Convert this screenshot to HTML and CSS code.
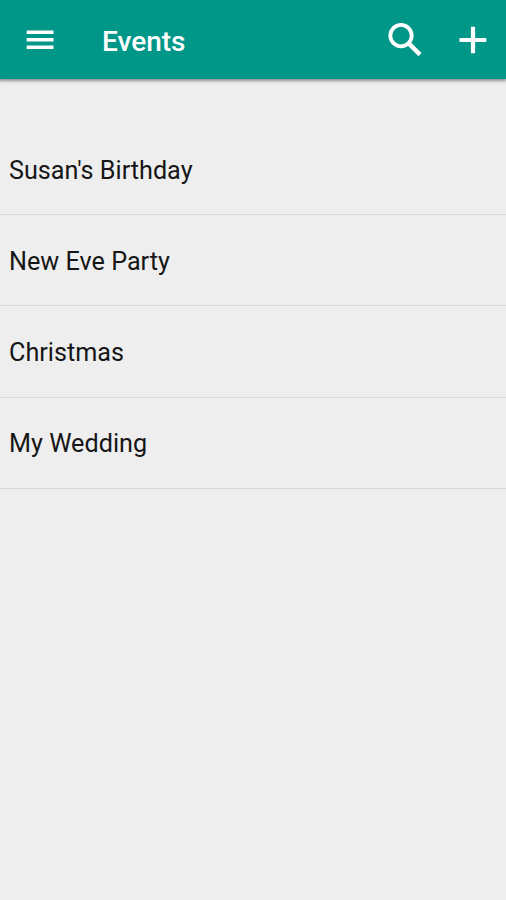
FILE: index.html
```html
<!DOCTYPE html>
<html lang="en">
<head>
<meta charset="utf-8">
<title>Events</title>
<link rel="stylesheet" href="styles.css">
</head>
<body>
<header class="toolbar">
  <button class="icon-button menu" aria-label="Menu"><svg width="28" height="20" viewBox="0 0 28 20"><path d="M0.7 0.6h26.8v3.4H0.7zM0.7 8h26.8v3.4H0.7zM0.7 15.5h26.8v3.4H0.7z"/></svg></button>
  <h1 class="title">Events</h1>
  <button class="icon-button search" aria-label="Search"><svg width="34" height="34" viewBox="0 0 34 34"><circle class="lens" cx="13" cy="12.6" r="10.7"/><path class="handle" d="M20.5 20.1l11.5 11.5"/></svg></button>
  <button class="icon-button add" aria-label="Add"><svg width="28" height="28" viewBox="0 0 28 28"><path d="M11.9 0.7h4.2v11.2h11.2v4.2H16.1v11.2h-4.2V16.1H0.5v-4.2h11.4z"/></svg></button>
</header>
<ul class="events">
  <li class="event">Susan's Birthday</li>
  <li class="event">New Eve Party</li>
  <li class="event">Christmas</li>
  <li class="event">My Wedding</li>
</ul>
</body>
</html>
```
FILE: styles.css
```css
* { box-sizing: border-box; }
body {
  margin: 0;
  min-height: 100vh;
  background: #eee;
  color: #161616;
  font-family: Roboto, sans-serif;
}
.toolbar {
  display: flex;
  align-items: center;
  height: 79px;
  padding: 0 19px 0 26px;
  background: #009688;
  box-shadow: 0 1px 3px 1px rgba(0, 0, 0, .4);
  color: #fff;
}
.icon-button {
  display: flex;
  padding: 0;
  border: 0;
  background: none;
  fill: #fff;
}
.title {
  flex: 1;
  margin: 4px 0 0 48px;
  font-size: 28px;
  font-weight: 500;
  line-height: 32px;
}
.lens, .handle {
  fill: none;
  stroke: #fff;
  stroke-width: 3.8;
}
.handle { stroke-width: 4.4; }
.add { margin-left: 37px; }
.events {
  margin: 0;
  padding: 45px 0 0;
  list-style: none;
}
.event {
  display: flex;
  align-items: center;
  height: 91.2px;
  padding: 2px 9px 0;
  border-bottom: 1px solid #d8d8d8;
  font-size: 25.2px;
}
```
